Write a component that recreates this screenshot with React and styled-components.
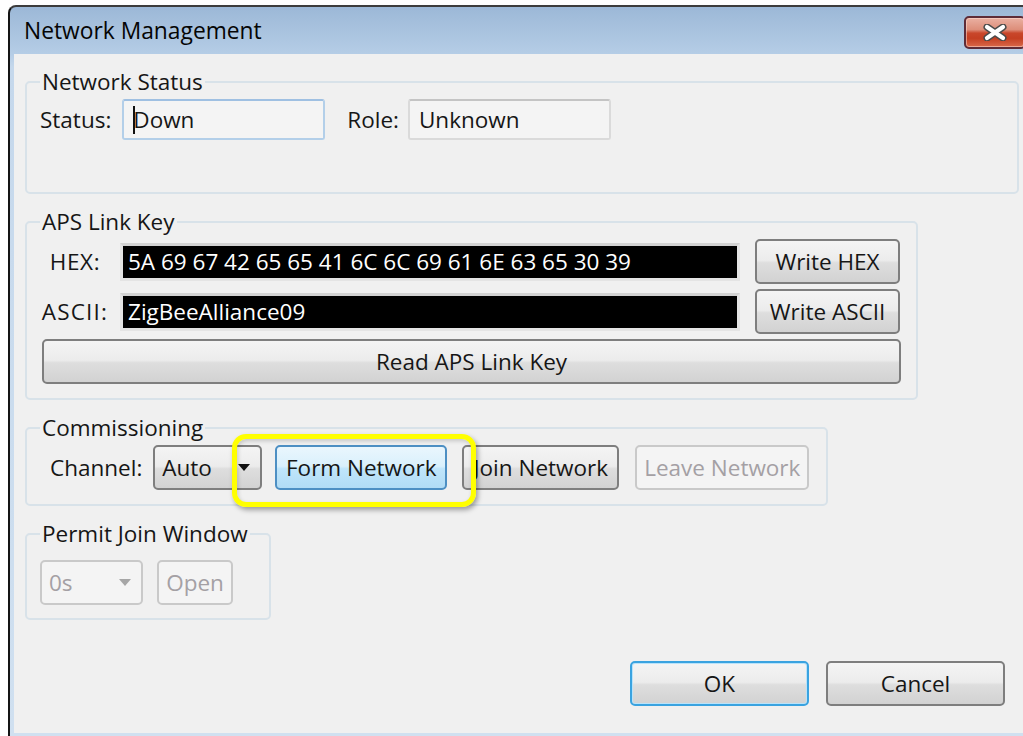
import styled, { createGlobalStyle, css } from "styled-components"

const GlobalStyle = createGlobalStyle`
  html, body {
    margin: 0;
    padding: 0;
    background: #ffffff;
    overflow: hidden;
  }
  body {
    font-family: "Open Sans", "Noto Sans", sans-serif;
    font-size: 22.5px;
    color: #161616;
  }
`

const Window = styled.div`
  box-sizing: border-box;
  margin: 5px 0 0 8px;
  width: 1040px;
  height: 731px;
  border-top: 2px solid #3c3c3c;
  border-left: 2px solid #151515;
  border-top-left-radius: 8px;
  padding: 0 0 3px 4px;
  background: linear-gradient(to bottom, #9cb8d7 0px, #b5cde6 47px, #c5d8ec 60px, #d0e0f0 100%);
  display: flex;
  flex-direction: column;
`

const TitleBar = styled.div`
  height: 47px;
  display: flex;
  align-items: flex-start;
  padding-left: 10px;
`

const Title = styled.div`
  font-size: 22.8px;
  line-height: 47px;
  color: #050505;
`

const CloseButton = styled.div`
  box-sizing: border-box;
  margin: 9px 22px 0 auto;
  width: 62px;
  height: 33px;
  border: 2px solid #5e2c38;
  border-radius: 5px;
  background: linear-gradient(
    to bottom,
    #eab0a2 0%,
    #dd8e7a 40%,
    #c9472b 52%,
    #c43f22 70%,
    #d8684a 100%
  );
  box-shadow: inset 0 0 0 1px rgba(255, 220, 210, 0.55);
  display: flex;
  align-items: center;
  justify-content: center;
`

const Client = styled.div`
  flex: 1;
  background: #f0f0f0;
  display: flex;
  flex-direction: column;
  gap: 15px;
  padding: 15px 0 0 11px;
`

const Group = styled.fieldset`
  box-sizing: border-box;
  margin: 0;
  min-width: 0;
  width: ${(p) => p.$w}px;
  height: ${(p) => p.$h}px;
  padding: ${(p) => p.$pt}px 13px 0 13px;
  border: 2px solid #d8e2e9;
  border-radius: 5px;
`

const Legend = styled.legend`
  padding: 0 2px;
  line-height: 26px;
  font-size: 22.5px;
`

const Row = styled.div`
  position: relative;
  display: flex;
  align-items: center;
  height: ${(p) => p.$h || 45}px;
  margin-bottom: ${(p) => p.$mb || 0}px;
`

const Label = styled.span`
  flex: none;
  width: ${(p) => (p.$w ? `${p.$w}px` : "auto")};
  margin-left: ${(p) => p.$ml || 0}px;
  text-align: ${(p) => (p.$w ? "center" : "left")};
  letter-spacing: ${(p) => p.$ls || 0}px;
  white-space: nowrap;
`

const ReadBox = styled.div`
  box-sizing: border-box;
  width: ${(p) => p.$w}px;
  height: 41px;
  margin-left: ${(p) => p.$ml || 0}px;
  padding-left: 9px;
  display: flex;
  align-items: center;
  border-radius: 3px;
  background: #f4f4f4;
  ${(p) =>
    p.$focused
      ? css`
          border: 2px solid #b3cfe9;
          border-top-color: #9fc0e2;
        `
      : css`
          border: 2px solid #dadada;
          border-top-color: #c4c4c4;
        `}
`

const Caret = styled.span`
  display: inline-block;
  width: 0;
  height: 28px;
  border-left: 2px solid #111;
  margin-right: -2px;
`

const KeyBox = styled.div`
  box-sizing: border-box;
  width: 620px;
  height: 38px;
  margin-left: 10px;
  padding-left: 5px;
  display: flex;
  align-items: center;
  border: 3px solid #e4e4e4;
  border-top-color: #d2d2d2;
  background: #000;
  color: #fff;
  white-space: nowrap;
`

const tones = {
  normal: css`
    border: 2px solid #7e7e7e;
    background: linear-gradient(to bottom, #f4f4f4 0%, #ececec 47%, #dedede 53%, #d2d2d2 100%);
  `,
  hot: css`
    border: 2px solid #4d8fc3;
    background: linear-gradient(to bottom, #eaf6fd 0%, #d9f0fc 47%, #bfe5fb 53%, #b1dcf5 100%);
  `,
  primary: css`
    border: 2px solid #3aa3e0;
    background: linear-gradient(to bottom, #f4f4f4 0%, #ececec 47%, #dedede 53%, #d2d2d2 100%);
    box-shadow: inset 0 0 0 1px #b9e3fa;
  `,
  off: css`
    border: 2px solid #c9c9c9;
    background: #f4f4f4;
    color: #a4a0a4;
  `,
}

const Button = styled.div`
  box-sizing: border-box;
  flex: none;
  width: ${(p) => p.$w}px;
  height: 45px;
  margin-left: ${(p) => p.$ml || 0}px;
  border-radius: 5px;
  display: flex;
  align-items: center;
  justify-content: center;
  white-space: nowrap;
  ${(p) => tones[p.$tone || "normal"]}
`

const Combo = styled(Button)`
  justify-content: space-between;
  padding: 0 10px 0 7px;
`

const Arrow = styled.span`
  width: 0;
  height: 0;
  border-left: 6px solid transparent;
  border-right: 6px solid transparent;
  border-top: 7px solid ${(p) => (p.$off ? "#a6a6a6" : "#111")};
`

const Highlight = styled.div`
  position: absolute;
  left: 192px;
  top: -11px;
  width: 244px;
  height: 73px;
  box-sizing: border-box;
  border: 5px solid #ffff00;
  border-radius: 14px;
  box-shadow: 2px 3px 5px rgba(0, 0, 0, 0.35), inset 1px 2px 4px rgba(0, 0, 0, 0.18);
  pointer-events: none;
`

const Footer = styled.div`
  display: flex;
  gap: 17px;
  margin: 26px 0 0 605px;
`

function CloseGlyph() {
  return (
    <svg width="26" height="17" viewBox="0 0 26 17">
      <path d="M5 3 L21 14 M21 3 L5 14" stroke="#4a4a4a" strokeWidth="7" strokeLinecap="round" />
      <path d="M5 3 L21 14 M21 3 L5 14" stroke="#ffffff" strokeWidth="4.2" strokeLinecap="round" />
    </svg>
  )
}

export default function App() {
  return (
    <>
      <GlobalStyle />
      <Window>
        <TitleBar>
          <Title>Network Management</Title>
          <CloseButton>
            <CloseGlyph />
          </CloseButton>
        </TitleBar>
        <Client>
          <Group $w={994} $h={125} $pt={4}>
            <Legend>Network Status</Legend>
            <Row $h={41}>
              <Label>Status:</Label>
              <ReadBox $w={203} $ml={11} $focused>
                <Caret />
                Down
              </ReadBox>
              <Label $ml={22}>Role:</Label>
              <ReadBox $w={203} $ml={9}>
                Unknown
              </ReadBox>
            </Row>
          </Group>

          <Group $w={893} $h={191} $pt={4}>
            <Legend>APS Link Key</Legend>
            <Row $mb={5}>
              <Label $w={70} $ls={0.6}>HEX:</Label>
              <KeyBox>5A 69 67 42 65 65 41 6C 6C 69 61 6E 63 65 30 39</KeyBox>
              <Button $w={145} $ml={15}>Write HEX</Button>
            </Row>
            <Row $mb={5}>
              <Label $w={70} $ls={1.2}>ASCII:</Label>
              <KeyBox>ZigBeeAlliance09</KeyBox>
              <Button $w={145} $ml={15}>Write ASCII</Button>
            </Row>
            <Row>
              <Button $w={859} $ml={2}>Read APS Link Key</Button>
            </Row>
          </Group>

          <Group $w={803} $h={91} $pt={4}>
            <Legend>Commissioning</Legend>
            <Row>
              <Label $ml={10}>Channel:</Label>
              <Combo $w={109} $ml={11}>
                Auto
                <Arrow />
              </Combo>
              <Button $w={172} $ml={13} $tone="hot">Form Network</Button>
              <Button $w={157} $ml={15}>Join Network</Button>
              <Button $w={174} $ml={16} $tone="off">Leave Network</Button>
              <Highlight />
            </Row>
          </Group>

          <Group $w={246} $h={99} $pt={13}>
            <Legend>Permit Join Window</Legend>
            <Row $h={44}>
              <Combo $w={103} $tone="off">
                0s
                <Arrow $off />
              </Combo>
              <Button $w={76} $ml={14} $tone="off">Open</Button>
            </Row>
          </Group>

          <Footer>
            <Button $w={179} $tone="primary">OK</Button>
            <Button $w={179}>Cancel</Button>
          </Footer>
        </Client>
      </Window>
    </>
  )
}
